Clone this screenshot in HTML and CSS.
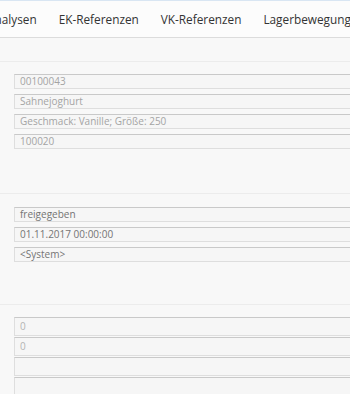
FILE: index.html
```html
<!DOCTYPE html>
<html lang="de">
<head>
  <meta charset="UTF-8">
  <title>Artikel</title>
  <link rel="stylesheet" href="styles.css">
</head>
<body>
  <div class="tabs">
    <span class="tab">Analysen</span>
    <span class="tab">EK-Referenzen</span>
    <span class="tab">VK-Referenzen</span>
    <span class="tab">Lagerbewegung</span>
  </div>

  <div class="group group-article">
    <div class="field">00100043</div>
    <div class="field">Sahnejoghurt</div>
    <div class="field">Geschmack: Vanille; Größe: 250</div>
    <div class="field">100020</div>
  </div>

  <div class="group group-status">
    <div class="field">freigegeben</div>
    <div class="field">01.11.2017 00:00:00</div>
    <div class="field">&lt;System&gt;</div>
  </div>

  <div class="group group-stock">
    <div class="field">0</div>
    <div class="field">0</div>
    <div class="field"></div>
    <div class="field"></div>
  </div>
</body>
</html>
```

FILE: styles.css
```css
body {
  margin: 0;
  background-color: #f8f8f8;
  font-family: "Open Sans", "Noto Sans", sans-serif;
  overflow: hidden;
}
.tabs {
  display: flex;
  height: 36px;
  align-items: center;
  background-color: #fcfcfc;
  border-top: 1px solid #d9e6f3;
  border-bottom: 1px solid #dcdcdc;
  margin-left: -24px;
  white-space: nowrap;
  font-size: 11.8px;
  color: #333;
}
.tab {
  padding: 0 11px;
}
.group {
  border-top: 1px solid #ececec;
  padding-left: 14px;
  display: flex;
  flex-direction: column;
}
.field {
  height: 13px;
  line-height: 13px;
  border: 1px solid #dedede;
  border-top-color: #c9c9c9;
  background-color: #f6f6f6;
  padding-left: 5px;
  font-size: 10px;
  color: #a4a4a4;
  white-space: nowrap;
  margin-right: -10px;
}
.group-article {
  margin-top: 23px;
  padding-top: 12px;
  gap: 5px;
}
.group-status {
  margin-top: 44px;
  padding-top: 13px;
  gap: 5px;
}
.group-status .field {
  color: #747474;
}
.group-stock {
  margin-top: 42px;
  padding-top: 12px;
  gap: 1px;
}
.group-stock .field {
  height: 17px;
  line-height: 17px;
  color: #b4b4b4;
}
```
